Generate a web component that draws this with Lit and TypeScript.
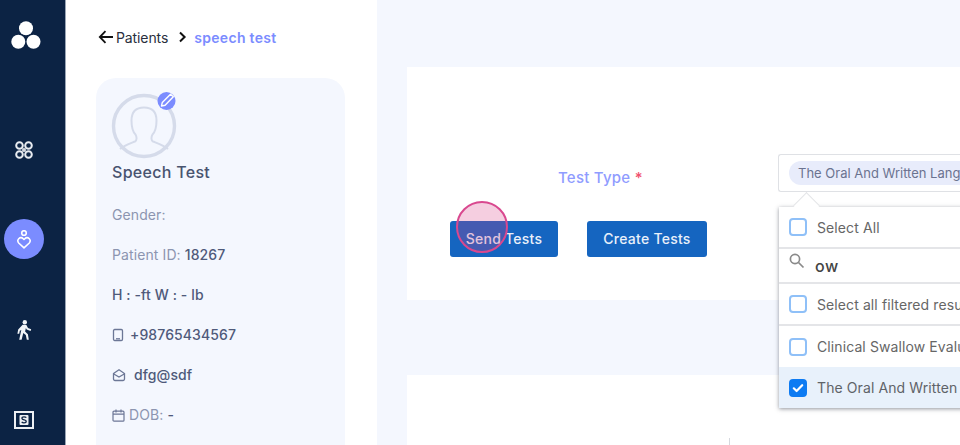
import { LitElement, html, css } from "lit";
import { customElement } from "lit/decorators.js";

const check = (on: boolean) => html`<span class="cb ${on ? "on" : ""}">${on
  ? html`<svg width="14" height="14" viewBox="0 0 14 14"><path d="M2.800 7.300l2.800 2.700L11.200 4.200" fill="none" stroke="#fff" stroke-width="2.200" stroke-linecap="round" stroke-linejoin="round"/></svg>`
  : ""}</span>`;

@customElement("app-root")
export class AppRoot extends LitElement {
  static styles = css`
    :host { display: flex; width: 960px; height: 445px; overflow: hidden; position: relative; background: #f4f7fe; font-family: Inter, "Noto Sans", sans-serif; color: #4a5578; }
    .side { flex: none; background: #0c2344; border-right: 1px solid #9aa5b5; display: flex; flex-direction: column; align-items: center; padding-right: 17px; box-sizing: content-box; width: 48px; }
    .side svg { display: block; flex: none; }
    .logo { margin: 21px 0 0 4px; }
    .nav1 { margin-top: 92px; }
    .active { margin-top: 60px; width: 40px; height: 40px; flex: none; border-radius: 50%; background: #7b8cff; display: flex; align-items: center; justify-content: center; }
    .nav2 { margin-top: 61px; }
    .nav3 { margin-top: 71px; }
    .panel { width: 311px; flex: none; background: #fff; padding: 28px 32px 0 30px; box-sizing: border-box; }
    .crumb { display: flex; align-items: center; height: 18px; font-size: 14px; color: #2a2f3d; letter-spacing: -.1px; }
    .crumb .cur { color: #7b8cff; font-weight: 600; margin-left: 7px; letter-spacing: .3px; }
    .crumb .chev { margin-left: 10px; }
    .card { margin-top: 32px; height: 400px; background: #f4f7fe; border-radius: 20px; padding: 15px 16px; box-sizing: border-box; position: relative; }
    .avatar { display: block; overflow: visible; }
    .name { font-size: 16px; font-weight: 500; color: #48536f; margin-top: 1px; line-height: 24px; letter-spacing: .3px; }
    .row { font-size: 14px; line-height: 20px; color: #8c95b0; display: flex; align-items: center; height: 20px; margin-top: 20px; letter-spacing: .1px; white-space: pre; }
    .row.first { margin-top: 21px; }
    .row b { font-weight: 500; color: #4f5a7a; }
    .row svg { margin-right: 6px; flex: none; }
    .main { flex: 1; min-width: 0; padding: 67px 0 0 30px; box-sizing: border-box; }
    .box { background: #fff; height: 233px; width: 600px; padding-top: 87px; box-sizing: border-box; }
    .field { display: flex; height: 38px; align-items: center; }
    .label { margin-left: 151px; width: 220px; padding-top: 8px; font-size: 15px; font-weight: 500; color: #8f9cff; letter-spacing: .25px; }
    .label i { font-style: normal; color: #f0506e; }
    .select { flex: 1; height: 38px; border: 1px solid #dfe1e5; border-radius: 3px; background: #fff; box-sizing: border-box; display: flex; align-items: center; padding-left: 10px; overflow: hidden; border-right: 0; }
    .chip { background: #e8ecfb; border-radius: 12px; height: 24px; line-height: 24px; padding: 0 9px; font-size: 13px; color: #6b7390; white-space: nowrap; }
    .btns { display: flex; margin: 29px 0 0 43px; gap: 29px; }
    .btn { background: #1565c0; color: #e9f0fa; border-radius: 3px; height: 36px; padding-bottom: 2px; box-sizing: border-box; font-size: 14px; font-weight: 500; display: flex; align-items: center; justify-content: center; letter-spacing: .25px; }
    .b1 { width: 108px; }
    .b2 { width: 120px; }
    .box2 { background: #fff; margin-top: 75px; height: 200px; width: 600px; }
    .tick { position: absolute; left: 729px; top: 438px; width: 1px; height: 7px; background: #d5d8de; }
    .ripple { position: absolute; left: 456px; top: 201px; width: 52px; height: 52px; border-radius: 50%; box-sizing: border-box; border: 2px solid #d9488f; background: rgba(217, 60, 130, .25); }
    .drop { position: absolute; left: 779px; top: 207px; width: 260px; height: 201px; background: #fff; box-shadow: 0 1px 4px rgba(40, 45, 60, .5); color: #666; font-size: 14px; }
    .nub { position: absolute; left: 797px; top: 196px; width: 19px; height: 19px; background: #fff; transform: rotate(45deg); border-left: 1px solid #e4e5e8; border-top: 1px solid #e4e5e8; box-sizing: border-box; }
    .opt { display: flex; align-items: center; height: 42px; padding-left: 10px; white-space: nowrap; border-bottom: 2px solid #e4e5e8; box-sizing: border-box; letter-spacing: .1px; }
    .opt.plain { border-bottom: 0; height: 41px; }
    .opt.sel { background: #e8f1fb; color: #5f6368; }
    .opt span.t { margin-left: 10px; }
    .cb { width: 18px; height: 18px; border: 2px solid #8fc0f8; border-radius: 4px; box-sizing: border-box; background: #fff; display: flex; align-items: center; justify-content: center; flex: none; }
    .cb.on { background: #0d7bf2; border-color: #0d7bf2; }
    .search { height: 35px; border-bottom: 2px solid #e4e5e8; display: flex; padding-left: 9px; box-sizing: border-box; }
    .search svg { margin-top: 3px; }
    .search span { margin: 7px 0 0 9px; font-size: 16px; font-weight: 500; color: #444; letter-spacing: .5px; }
  `;

  render() {
    return html`
      <nav class="side">
        <svg class="logo" width="30" height="28" viewBox="0 0 30 28" fill="#fff"><circle cx="15" cy="7.200" r="7"/><circle cx="7.300" cy="20.800" r="7"/><circle cx="22.500" cy="20.800" r="7"/></svg>
        <svg class="nav1" width="18" height="18" viewBox="0 0 18 18" fill="none" stroke="#e8ebf0" stroke-width="2"><circle cx="4.500" cy="4.500" r="3.300"/><circle cx="13.500" cy="4.500" r="3.300"/><circle cx="4.500" cy="13.500" r="3.300"/><circle cx="13.500" cy="13.500" r="3.300"/><path d="M7 8.200h4M7 9.800h4M8.200 7v4M9.800 7v4" stroke-width="1"/></svg>
        <div class="active"><svg width="14" height="19" viewBox="0 0 14 19" fill="none" stroke="#fff" stroke-width="1.600"><circle cx="7" cy="3" r="2.300"/><path d="M7 17.800L1.700 13a3 3 0 0 1 0-4.300 3.200 3.200 0 0 1 4.500 0l.8.800.8-.8a3.200 3.200 0 0 1 4.500 0 3 3 0 0 1 0 4.300z" stroke-linejoin="round"/></svg></div>
        <svg class="nav2" width="15" height="20" viewBox="0 0 15 20" fill="#f2f4f7"><circle cx="7.800" cy="2.200" r="2.200"/><path d="M5.600 4.800l3.800.1 1.600 3 3.200 1.300-.6 1.700-3.900-1.500-.8-1.300-.8 3.500 2.800 2.600.9 5.500h-2l-1-4.700-2.500-2.100-1.700 6.800H2.200l2.100-9.700-1.500.8-.6 3H.4l.8-4.200z"/></svg>
        <svg class="nav3" width="20" height="18" viewBox="0 0 20 18"><rect x="1" y="1" width="18" height="16" fill="none" stroke="#eef0f3" stroke-width="2"/><rect x="5.500" y="4" width="9" height="10" rx="1" fill="#eef0f3"/><path d="M12.300 6.700C11.800 6 11 5.800 10 5.800c-1.200 0-2.100.5-2.100 1.500 0 2.200 4.300 1 4.300 3 0 1-1 1.600-2.200 1.600-1 0-1.800-.3-2.300-1" fill="none" stroke="#0c2344" stroke-width="1.300"/></svg>
      </nav>
      <aside class="panel">
        <div class="crumb">
          <svg width="17" height="14" viewBox="0 0 17 14" fill="none" stroke="#111" stroke-width="1.800" style="margin:0 1px 0 2px"><path d="M15 7H2M7.500 1.200L1.800 7l5.700 5.800"/></svg>
          <span>Patients</span>
          <svg class="chev" width="9" height="12" viewBox="0 0 9 12" fill="none" stroke="#111" stroke-width="2"><path d="M2 1.500L6.600 6 2 10.500"/></svg>
          <span class="cur">speech test</span>
        </div>
        <div class="card">
          <svg class="avatar" width="72" height="66" viewBox="0 0 72 66" fill="none">
            <circle cx="32" cy="33" r="30.500" stroke="#d5dbea" stroke-width="3.400"/>
            <path d="M8 56c4-3.500 10-5.500 15-7.500 2-1 2-4.500.5-7-3-3-4-8-4-14 0-8 4-13 12.500-13s12.500 5 12.500 13c0 6-1 11-4 14-1.500 2.500-1.500 6 .5 7 5 2 11 4 15 7.500" stroke="#d5dbea" stroke-width="2"/>
            <circle cx="54.500" cy="8" r="9" fill="#7b8cff"/>
            <path d="M49.500 13l.8-3.600L58.500 1.200l2.800 2.600-8.200 8.400z" stroke="#fff" stroke-width="1.400" stroke-linejoin="round"/>
          </svg>
          <div class="name">Speech Test</div>
          <div class="row first">Gender:</div>
          <div class="row">Patient ID: <b>18267</b></div>
          <div class="row"><b>H : -ft W : - lb</b></div>
          <div class="row"><svg width="12" height="14" viewBox="0 0 12 14" fill="none" stroke="#6c7796" stroke-width="1.300"><rect x="1.500" y="1.500" width="9" height="11" rx="1.200"/><path d="M4 10.800h4"/></svg><b>+98765434567</b></div>
          <div class="row"><svg width="15" height="14" viewBox="0 0 15 14" fill="none" stroke="#6c7796" stroke-width="1.300" style="margin-right:7px"><path d="M1.500 5.500L7 1.800l5.500 3.700V11a1.500 1.500 0 0 1-1.500 1.500H3A1.500 1.500 0 0 1 1.500 11zM1.800 6l5.200 3 5.200-3"/></svg><b>dfg@sdf</b></div>
          <div class="row"><svg width="13" height="13" viewBox="0 0 13 13" fill="none" stroke="#6c7796" stroke-width="1.200" style="margin-right:4px"><rect x="1" y="2.200" width="11" height="10" rx="1"/><path d="M1 5.200h11M4 .6v3M9 .6v3"/></svg>DOB: <b>-</b></div>
        </div>
      </aside>
      <main class="main">
        <section class="box">
          <div class="field">
            <div class="label">Test Type <i>*</i></div>
            <div class="select"><span class="chip">The Oral And Written Language Scales</span></div>
          </div>
          <div class="btns"><div class="btn b1">Send Tests</div><div class="btn b2">Create Tests</div></div>
        </section>
        <section class="box2"></section>
      </main>
      <div class="tick"></div>
      <div class="ripple"></div>
      <div class="drop">
        <div class="opt">${check(false)}<span class="t">Select All</span></div>
        <div class="search">
          <svg width="18" height="18" viewBox="0 0 18 18" fill="none" stroke="#8a8a8a" stroke-width="1.700"><circle cx="7" cy="7" r="4.600"/><path d="M10.500 10.500L15.500 15.500"/></svg>
          <span>ow</span>
        </div>
        <div class="opt">${check(false)}<span class="t">Select all filtered results</span></div>
        <div class="opt plain">${check(false)}<span class="t">Clinical Swallow Evaluation</span></div>
        <div class="opt plain sel">${check(true)}<span class="t">The Oral And Written Language Scales</span></div>
      </div>
      <div class="nub"></div>
    `;
  }
}
